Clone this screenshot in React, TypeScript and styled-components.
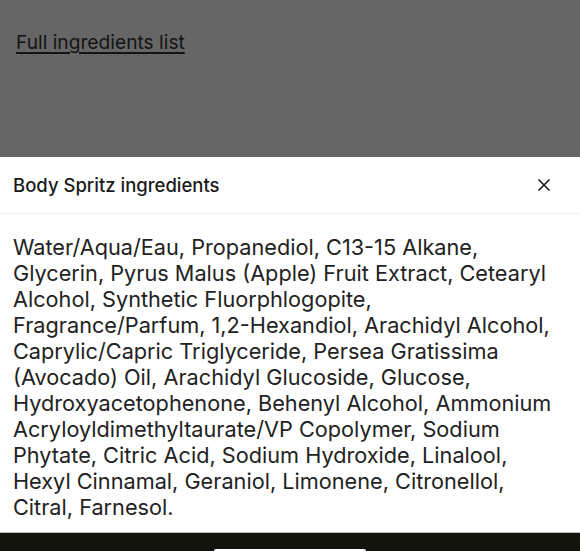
import styled, { createGlobalStyle } from 'styled-components'

const GlobalStyle = createGlobalStyle`
  html, body {
    margin: 0;
    padding: 0;
    background: #ffffff;
  }
  body {
    font-family: 'Inter', 'Liberation Sans', sans-serif;
    -webkit-font-smoothing: antialiased;
  }
`

const Page = styled.div`
  display: flex;
  flex-direction: column;
  width: 580px;
  height: 551px;
  overflow: hidden;
`

const Backdrop = styled.div`
  height: 157px;
  flex-shrink: 0;
  background: #666666;
  padding: 30px 16px 0;
  box-sizing: border-box;
`

const FullListLink = styled.a`
  font-size: 19.2px;
  color: #141414;
  text-decoration: underline;
  text-underline-offset: 3px;
  text-decoration-thickness: 1.5px;
  cursor: pointer;
`

const Sheet = styled.section`
  display: flex;
  flex-direction: column;
  background: #ffffff;
  flex: 1;
`

const SheetHeader = styled.header`
  display: flex;
  align-items: center;
  justify-content: space-between;
  height: 56px;
  padding: 0 26px 0 13px;
  border-bottom: 1px solid #efefef;
  flex-shrink: 0;
`

const SheetTitle = styled.h2`
  margin: 0;
  font-size: 18.5px;
  font-weight: 500;
  color: #1a1a1a;
`

const CloseButton = styled.button`
  display: flex;
  align-items: center;
  justify-content: center;
  width: 20px;
  height: 20px;
  padding: 0;
  border: none;
  background: transparent;
  color: #1a1a1a;
  cursor: pointer;
`

const IngredientText = styled.p`
  margin: 0;
  padding: 20px 13px 0;
  font-size: 21.7px;
  line-height: 26px;
  color: #222222;
`

const Line = styled.span`
  display: block;
  white-space: nowrap;
`

const BottomBar = styled.div`
  height: 18px;
  flex-shrink: 0;
  display: flex;
  justify-content: center;
  align-items: flex-end;
  background: #14140e;
  border-top: 1px solid #bdbdb8;
`

const BarButton = styled.div`
  width: 152px;
  height: 2px;
  background: #ffffff;
  border-radius: 2px 2px 0 0;
`

const lines = [
  'Water/Aqua/Eau, Propanediol, C13-15 Alkane,',
  'Glycerin, Pyrus Malus (Apple) Fruit Extract, Cetearyl',
  'Alcohol, Synthetic Fluorphlogopite,',
  'Fragrance/Parfum, 1,2-Hexandiol, Arachidyl Alcohol,',
  'Caprylic/Capric Triglyceride, Persea Gratissima',
  '(Avocado) Oil, Arachidyl Glucoside, Glucose,',
  'Hydroxyacetophenone, Behenyl Alcohol, Ammonium',
  'Acryloyldimethyltaurate/VP Copolymer, Sodium',
  'Phytate, Citric Acid, Sodium Hydroxide, Linalool,',
  'Hexyl Cinnamal, Geraniol, Limonene, Citronellol,',
  'Citral, Farnesol.',
]

export default function App() {
  return (
    <Page>
      <GlobalStyle />
      <Backdrop>
        <FullListLink>Full ingredients list</FullListLink>
      </Backdrop>
      <Sheet>
        <SheetHeader>
          <SheetTitle>Body Spritz ingredients</SheetTitle>
          <CloseButton aria-label="Close">
            <svg width="14" height="14" viewBox="0 0 14 14" fill="none">
              <path d="M1.5 1.5l11 11M12.5 1.5l-11 11" stroke="currentColor" strokeWidth="1.6" />
            </svg>
          </CloseButton>
        </SheetHeader>
        <IngredientText>
          {lines.map((line) => (
            <Line key={line}>{line}</Line>
          ))}
        </IngredientText>
      </Sheet>
      <BottomBar>
        <BarButton />
      </BottomBar>
    </Page>
  )
}
